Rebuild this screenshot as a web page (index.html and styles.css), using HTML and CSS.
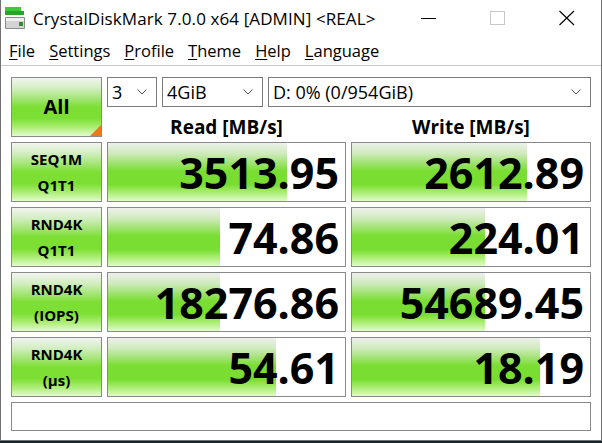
FILE: index.html
```html
<!DOCTYPE html>
<html lang="en">
<head>
  <meta charset="UTF-8">
  <title>CrystalDiskMark 7.0.0 x64 [ADMIN] &lt;REAL&gt;</title>
  <link rel="stylesheet" href="styles.css">
</head>
<body>
  <div class="window">
    <!-- Title bar -->
    <div class="titlebar">
      <svg class="app-icon" width="22" height="26" viewBox="0 0 22 26">
        <rect x="1" y="2" width="16" height="4" fill="#3cc83c"/>
        <rect x="1" y="6" width="19" height="4" fill="#22a822"/>
        <rect x="1" y="12" width="20" height="12" rx="1" fill="#8c8c8c"/>
        <rect x="2" y="13" width="18" height="10" fill="#d4d4d4"/>
        <rect x="2" y="13" width="18" height="3" fill="#eeeeee"/>
        <rect x="15" y="17" width="4" height="4" fill="#2f8f2f"/>
      </svg>
      <span class="title">CrystalDiskMark 7.0.0 x64 [ADMIN] &lt;REAL&gt;</span>
      <div class="caption">
        <div class="cap-btn">
          <svg width="16" height="16" viewBox="0 0 16 16"><line x1="0" y1="8.5" x2="15" y2="8.5" stroke="#000" stroke-width="1"/></svg>
        </div>
        <div class="cap-btn">
          <svg width="16" height="16" viewBox="0 0 16 16"><rect x="0.5" y="1.5" width="14" height="13" fill="none" stroke="#c8c8c8" stroke-width="1"/></svg>
        </div>
        <div class="cap-btn">
          <svg width="16" height="16" viewBox="0 0 16 16"><path d="M0.5 1 L15 15 M15 1 L0.5 15" stroke="#000" stroke-width="1.1"/></svg>
        </div>
      </div>
    </div>

    <!-- Menu bar -->
    <div class="menubar">
      <span class="menu-item"><u>F</u>ile</span>
      <span class="menu-item"><u>S</u>ettings</span>
      <span class="menu-item"><u>P</u>rofile</span>
      <span class="menu-item"><u>T</u>heme</span>
      <span class="menu-item"><u>H</u>elp</span>
      <span class="menu-item"><u>L</u>anguage</span>
    </div>

    <!-- Benchmark panel -->
    <div class="panel">
      <div class="btn btn-all">All<span class="corner"></span></div>

      <div class="selects">
        <div class="combo combo-count">3<svg class="chev" width="10" height="6" viewBox="0 0 10 6"><path d="M0.5 0.5 L5 5 L9.5 0.5" fill="none" stroke="#555" stroke-width="1"/></svg></div>
        <div class="combo combo-size">4GiB<svg class="chev" width="10" height="6" viewBox="0 0 10 6"><path d="M0.5 0.5 L5 5 L9.5 0.5" fill="none" stroke="#555" stroke-width="1"/></svg></div>
        <div class="combo combo-drive">D: 0% (0/954GiB)<svg class="chev" width="10" height="6" viewBox="0 0 10 6"><path d="M0.5 0.5 L5 5 L9.5 0.5" fill="none" stroke="#555" stroke-width="1"/></svg></div>
      </div>

      <div class="col-head">Read [MB/s]</div>
      <div class="col-head">Write [MB/s]</div>

      <div class="btn">SEQ1M<br>Q1T1</div>
      <div class="result"><div class="bar" style="width: 75.5%"></div><span class="num">3513.95</span></div>
      <div class="result"><div class="bar" style="width: 73.5%"></div><span class="num">2612.89</span></div>

      <div class="btn">RND4K<br>Q1T1</div>
      <div class="result"><div class="bar" style="width: 47.3%"></div><span class="num">74.86</span></div>
      <div class="result"><div class="bar" style="width: 55.9%"></div><span class="num">224.01</span></div>

      <div class="btn">RND4K<br>(IOPS)</div>
      <div class="result"><div class="bar" style="width: 47.3%"></div><span class="num">18276.86</span></div>
      <div class="result"><div class="bar" style="width: 55.9%"></div><span class="num">54689.45</span></div>

      <div class="btn">RND4K<br>(μs)</div>
      <div class="result"><div class="bar" style="width: 70.9%"></div><span class="num">54.61</span></div>
      <div class="result"><div class="bar" style="width: 79%"></div><span class="num">18.19</span></div>

      <div class="status"></div>
    </div>
  </div>
</body>
</html>
```

FILE: styles.css
```css
body {
  margin: 0;
  padding: 0;
  background-color: #14262c;
  font-family: "Open Sans", "Noto Sans", sans-serif;
  color: #000;
}

.window {
  width: 600px;
  height: 440px;
  background-color: #fff;
  border: 1px solid #707070;
  border-top: none;
}

/* title bar */
.titlebar {
  display: flex;
  align-items: center;
  height: 36px;
}

.app-icon {
  margin-left: 3px;
  margin-right: 7px;
}

.title {
  font-size: 17px;
  letter-spacing: 0.1px;
}

.caption {
  display: flex;
  margin-left: auto;
  align-self: stretch;
}

.cap-btn {
  width: 69px;
  display: flex;
  align-items: center;
  justify-content: center;
}

/* menu bar */
.menubar {
  display: flex;
  align-items: center;
  height: 29px;
  padding-left: 1px;
  border-bottom: 1px solid #c8c8c8;
  font-size: 16.5px;
}

.menu-item {
  padding: 0 7px;
}

.menu-item u {
  text-decoration-thickness: 1px;
  text-underline-offset: 2px;
}

/* benchmark grid */
.panel {
  display: grid;
  grid-template-columns: 91px 239px 240px;
  grid-template-rows: 30px 25px 60px 60px 60px 60px 29px;
  column-gap: 5px;
  row-gap: 5px;
  padding: 11px 0 0 10px;
}

.btn {
  border: 1px solid #8a8a8a;
  background: linear-gradient(to bottom, #f2f4f0 0%, #d2eec0 18%, #9ee46c 38%, #7ddf34 50%, #7ddf34 70%, #a8ec70 84%, #e2fbcc 100%);
  display: flex;
  align-items: center;
  justify-content: center;
  text-align: center;
  font-weight: bold;
  font-size: 15px;
  line-height: 26px;
}

.btn-all {
  grid-row: 1 / 3;
  font-size: 20px;
  position: relative;
}

.corner {
  position: absolute;
  right: 0;
  bottom: 0;
  width: 0;
  height: 0;
  border-left: 11px solid transparent;
  border-bottom: 11px solid #f07818;
}

.selects {
  grid-column: 2 / 4;
  display: flex;
  gap: 5px;
}

.combo {
  border: 1px solid #7a7a7a;
  display: flex;
  align-items: center;
  padding-left: 4px;
  font-size: 18px;
}

.combo .chev {
  margin-left: auto;
  margin-right: 9px;
}

.combo-count {
  width: 44px;
}

.combo-size {
  width: 95px;
}

.combo-drive {
  flex: 1;
}

.col-head {
  display: flex;
  align-items: flex-end;
  justify-content: center;
  font-weight: bold;
  font-size: 19px;
  line-height: 20px;
}

.result {
  border: 1px solid #8a8a8a;
  display: grid;
}

.bar {
  grid-area: 1 / 1;
  background: linear-gradient(to bottom, #eef0ec 0%, #cfeabd 18%, #9ce26a 36%, #7ade32 48%, #7ade32 72%, #a6ec6c 84%, #e0fbc8 100%);
}

.num {
  grid-area: 1 / 1;
  align-self: center;
  justify-self: end;
  padding-right: 6px;
  font-weight: bold;
  font-size: 43px;
  line-height: 1;
}

.status {
  grid-column: 1 / 4;
  border: 1px solid #8a8a8a;
}
```
